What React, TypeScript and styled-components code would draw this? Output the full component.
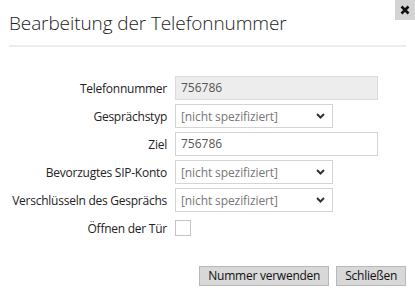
import styled, { createGlobalStyle } from "styled-components";

const GlobalStyle = createGlobalStyle`
    body {
        margin: 0;
        background: #ffffff;
        font-family: "Open Sans", "Noto Sans", sans-serif;
    }
`;

type Field =
    | { label: string; kind: "input"; value: string; readOnly?: boolean }
    | { label: string; kind: "select"; value: string }
    | { label: string; kind: "checkbox" };

const fields: Field[] = [
    { label: "Telefonnummer", kind: "input", value: "756786", readOnly: true },
    { label: "Gesprächstyp", kind: "select", value: "[nicht spezifiziert]" },
    { label: "Ziel", kind: "input", value: "756786" },
    { label: "Bevorzugtes SIP-Konto", kind: "select", value: "[nicht spezifiziert]" },
    { label: "Verschlüsseln des Gesprächs", kind: "select", value: "[nicht spezifiziert]" },
    { label: "Öffnen der Tür", kind: "checkbox" },
];

const Chevron = () => (
    <svg width="9" height="6" viewBox="0 0 9 6">
        <path d="M1 1 L4.5 4.5 L8 1" fill="none" stroke="#333" strokeWidth="2" />
    </svg>
);

const CloseIcon = () => (
    <svg width="10" height="10" viewBox="0 0 10 10">
        <path d="M1.5 1.5 L8.5 8.5 M8.5 1.5 L1.5 8.5" stroke="#111" strokeWidth="2.6" />
    </svg>
);

const App: React.FC = () => {
    return (
        <>
            <GlobalStyle />
            <Dialog>
                <CloseButton>
                    <CloseIcon />
                </CloseButton>
                <Header>
                    <Title>Bearbeitung der Telefonnummer</Title>
                </Header>
                <Form>
                    {fields.map((f) => (
                        <Row key={f.label}>
                            <Label>{f.label}</Label>
                            {f.kind === "input" && (
                                <TextBox $readOnly={f.readOnly}>{f.value}</TextBox>
                            )}
                            {f.kind === "select" && (
                                <SelectBox>
                                    <span>{f.value}</span>
                                    <Chevron />
                                </SelectBox>
                            )}
                            {f.kind === "checkbox" && <Check />}
                        </Row>
                    ))}
                </Form>
                <Footer>
                    <Button>Nummer verwenden</Button>
                    <Button>Schließen</Button>
                </Footer>
            </Dialog>
        </>
    );
};

// Styled Components

const Dialog = styled.div`
    position: relative;
    width: 415px;
    height: 298px;
    background: #ffffff;
`;

const CloseButton = styled.div`
    position: absolute;
    top: 0;
    right: 0;
    width: 20px;
    height: 20px;
    background: #d4d4d4;
    display: flex;
    align-items: center;
    justify-content: center;
`;

const Header = styled.div`
    margin: 0 9px;
    height: 47px;
    border-bottom: 2px solid #ececec;
    box-sizing: border-box;
    padding-top: 11px;
`;

const Title = styled.h1`
    margin: 0;
    font-size: 19px;
    line-height: 24px;
    font-weight: 300;
    letter-spacing: -0.1px;
    color: #222;
`;

const Form = styled.div`
    display: flex;
    flex-direction: column;
    gap: 4px;
    margin-top: 29px;
`;

const Row = styled.div`
    display: grid;
    grid-template-columns: 167px auto;
    column-gap: 8px;
    align-items: center;
    height: 24px;
`;

const Label = styled.div`
    text-align: right;
    font-size: 12px;
    letter-spacing: -0.25px;
    color: #222;
    white-space: nowrap;
`;

const TextBox = styled.div<{ $readOnly?: boolean }>`
    width: 203px;
    height: 24px;
    box-sizing: border-box;
    border: 1px solid ${(p) => (p.$readOnly ? "#dcdcdc" : "#d4d4d4")};
    background: ${(p) => (p.$readOnly ? "#ededed" : "#ffffff")};
    padding: 0 5px;
    font-size: 12px;
    line-height: 22px;
    color: #555;
`;

const SelectBox = styled.div`
    width: 158px;
    height: 24px;
    box-sizing: border-box;
    border: 1px solid #d4d4d4;
    background: #ffffff;
    padding: 0 7px 0 5px;
    font-size: 12px;
    letter-spacing: -0.1px;
    color: #777;
    display: flex;
    align-items: center;
    justify-content: space-between;
`;

const Check = styled.div`
    width: 16px;
    height: 16px;
    box-sizing: border-box;
    border: 1px solid #c4c4c4;
    background: #fff;
`;

const Footer = styled.div`
    display: flex;
    justify-content: flex-end;
    gap: 7px;
    margin: 26px 9px 0 0;
`;

const Button = styled.div`
    height: 20px;
    box-sizing: border-box;
    padding: 0 8px;
    border: 1px solid #b8b8b8;
    background: #d8d8d8;
    font-size: 12px;
    letter-spacing: -0.25px;
    line-height: 18px;
    color: #111;
`;

export default App;
